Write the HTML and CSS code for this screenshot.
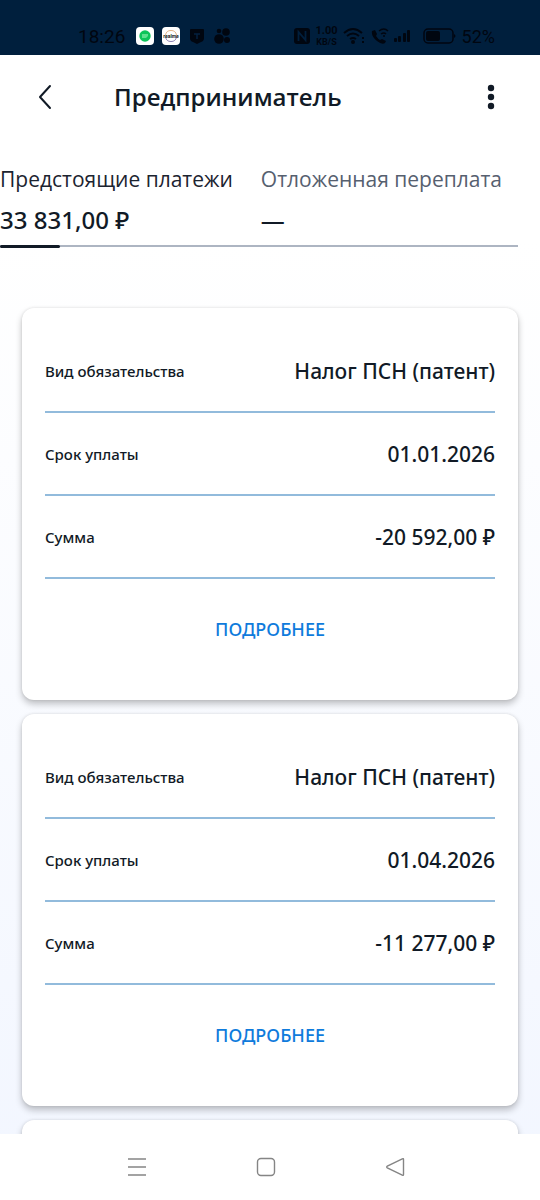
FILE: index.html
```html
<!DOCTYPE html>
<html lang="ru">
<head>
<meta charset="utf-8">
<meta name="viewport" content="width=device-width, initial-scale=1">
<title>Предприниматель</title>
<link rel="stylesheet" href="styles.css">
</head>
<body>
<div class="status">
  <div class="status-left">
    <span class="clock">18:26</span>
    <svg class="tile" width="18" height="18" viewBox="0 0 18 18"><rect width="18" height="18" rx="4" fill="#fff"/><circle cx="9" cy="9" r="5.7" fill="#0cc45a"/><path d="M6 7h6v2l-2 2H6z" fill="#5ce08e"/></svg>
    <svg class="tile" width="18" height="18" viewBox="0 0 18 18"><rect width="18" height="18" rx="4" fill="#fff"/><path d="M3.5 8a5.6 5.6 0 0 1 11 0" fill="none" stroke="#e3b58a"/><path d="M3.5 10a5.6 5.6 0 0 0 11 0" fill="none" stroke="#8d83b5"/><text x="9" y="11" class="tile-text" text-anchor="middle">realme</text></svg>
    <svg class="shield" width="16" height="16" viewBox="0 0 16 16"><path d="M1 2q0-1 1-1h12q1 0 1 1v8q0 3-3 4l-4 2-4-2q-3-1-3-4z" fill="#000610"/><path d="M5 6h6M8 6v5" stroke="#03213f" stroke-width="1.500"/></svg>
    <svg width="18" height="16" viewBox="0 0 18 16" fill="#000610"><circle cx="6" cy="11" r="4.800"/><circle cx="13" cy="4" r="3.800"/><circle cx="6" cy="3" r="2.300"/><circle cx="14" cy="12" r="3"/></svg>
  </div>
  <div class="status-right">
    <svg width="16" height="16" viewBox="0 0 16 16"><rect width="16" height="16" rx="3" fill="#000610"/><path d="M4.500 13V4l7 8V3" fill="none" stroke="#001f3d" stroke-width="1.800"/></svg>
    <span class="speed"><b>1.00</b><b class="unit">KB/S</b></span>
    <svg width="23" height="18" viewBox="0 0 23 18" fill="none" stroke="#000610" stroke-width="2"><path d="M1 6q9-8 18 0M4 9q6-5 12 0M7 12q3-2 6 0"/><circle cx="10" cy="15" r="1" fill="#000610"/><path d="M20 10v2M20 14v2"/></svg>
    <svg width="18" height="16" viewBox="0 0 18 16"><path d="M1 3l3-1 2 4-1 2q2 3 4 4l2-1 4 2-1 2q-3 2-8-2Q0 8 1 3z" fill="#000610"/><path d="M8 3q5-4 9 0M10 6q3-2 5 0M12 8h2" fill="none" stroke="#000610" stroke-width="1.500"/></svg>
    <svg class="signal" width="18" height="14" viewBox="0 0 18 14" fill="#000610"><rect y="9" width="3" height="4" rx="1"/><rect x="4" y="7" width="3" height="6" rx="1"/><rect x="9" y="4" width="3" height="9" rx="1"/><rect x="13" y="1" width="3" height="12" rx="1"/></svg>
    <svg class="battery" width="34" height="16" viewBox="0 0 34 16"><rect x="1" y="1" width="29" height="14" rx="4" fill="none" stroke="#000610" stroke-width="1.500"/><rect x="3" y="3" width="14" height="10" rx="2" fill="#000610"/><path d="M31 6q3 2 0 4z" fill="#000610"/></svg>
    <span class="percent">52%</span>
  </div>
</div>

<header class="appbar">
  <button class="icon-btn" aria-label="Назад"><svg width="14" height="26" viewBox="0 0 14 26"><path d="M12 2L2 13l10 11" fill="none" stroke="#111a26" stroke-width="2" stroke-linecap="round" stroke-linejoin="round"/></svg></button>
  <h1>Предприниматель</h1>
  <button class="icon-btn" aria-label="Меню"><svg width="8" height="26" viewBox="0 0 8 26" fill="#111a26"><circle cx="4" cy="4" r="3.200"/><circle cx="4" cy="13" r="3.200"/><circle cx="4" cy="22" r="3.200"/></svg></button>
</header>

<main>
  <nav class="tabs">
    <button class="tab active"><span class="tab-label">Предстоящие платежи</span><span class="tab-value">33 831,00 ₽</span></button>
    <button class="tab"><span class="tab-label">Отложенная переплата</span><span class="tab-value">—</span></button>
  </nav>
  <section class="cards">
    <article class="card">
      <dl>
        <div class="row"><dt>Вид обязательства</dt><dd>Налог ПСН (патент)</dd></div>
        <div class="row"><dt>Срок уплаты</dt><dd>01.01.2026</dd></div>
        <div class="row"><dt>Сумма</dt><dd>-20 592,00 ₽</dd></div>
      </dl>
      <button class="more">ПОДРОБНЕЕ</button>
    </article>
    <article class="card">
      <dl>
        <div class="row"><dt>Вид обязательства</dt><dd>Налог ПСН (патент)</dd></div>
        <div class="row"><dt>Срок уплаты</dt><dd>01.04.2026</dd></div>
        <div class="row"><dt>Сумма</dt><dd>-11 277,00 ₽</dd></div>
      </dl>
      <button class="more">ПОДРОБНЕЕ</button>
    </article>
    <article class="card"></article>
  </section>
</main>

<footer class="navbar">
  <button aria-label="Недавние"><svg width="20" height="20" viewBox="0 0 20 20"><path d="M1 2h18M1 10h18M1 18h18" stroke="#858585" stroke-width="1.500"/></svg></button>
  <button aria-label="Домой"><svg width="20" height="20" viewBox="0 0 20 20"><rect x="1.500" y="1.500" width="17" height="17" rx="3.500" fill="none" stroke="#858585" stroke-width="1.400"/></svg></button>
  <button aria-label="Назад"><svg width="20" height="20" viewBox="0 0 20 20"><path d="M17.300 1.800Q18.500 1.300 18.500 2.500v15q0 1.200-1.200.7L2.300 10.800q-1.200-.8 0-1.600z" fill="none" stroke="#858585" stroke-width="1.400"/></svg></button>
</footer>
</body>
</html>
```
FILE: styles.css
```css
* { box-sizing: border-box; }

body {
  margin: 0;
  height: 100vh;
  display: flex;
  flex-direction: column;
  overflow: hidden;
  font-family: "Open Sans", "Noto Sans", sans-serif;
  color: #111a26;
  background: linear-gradient(#fff 20%, #f2f6ff);
}

button {
  padding: 0;
  border: 0;
  background: none;
  color: inherit;
  font: inherit;
}

svg { display: block; flex: none; }

.status {
  flex: none;
  height: 55px;
  padding: 18px 45px 0 78px;
  display: flex;
  justify-content: space-between;
  background: #001f3d;
  color: #000610;
  font-family: Roboto, sans-serif;
}

.status-left,
.status-right {
  display: flex;
  align-items: center;
  height: 36px;
}

.status-left { gap: 8px; }
.status-right { gap: 5px; }

.clock { font-size: 19px; margin-right: 3px; }
.percent { font-size: 18px; }
.tile-text { font-size: 5px; font-weight: 700; fill: #222; }
.shield { margin-left: 1px; }
.battery { margin-left: 6px; }

.speed {
  display: flex;
  flex-direction: column;
  align-items: center;
  font-size: 11px;
  line-height: 12px;
}

.speed .unit { font-size: 9px; line-height: 10px; }

.appbar {
  flex: none;
  height: 85px;
  padding: 0 29px 2px 25px;
  display: flex;
  align-items: center;
  background: #fff;
}

.icon-btn {
  width: 40px;
  height: 40px;
  display: grid;
  place-items: center;
}

.appbar h1 {
  flex: 1;
  margin: 0 0 0 49px;
  font-size: 24px;
  line-height: 32px;
  font-weight: 600;
}

main {
  flex: 1;
  min-height: 0;
  overflow: hidden;
}

.tabs {
  display: flex;
  gap: 28px;
  margin: 24px 22px 0 0;
  border-bottom: 2px solid #adb5c2;
}

.tab {
  position: relative;
  display: flex;
  flex-direction: column;
  gap: 10px;
  height: 81px;
  text-align: left;
  white-space: nowrap;
  color: #56606f;
}

.active { color: #1c2430; }

.active::after {
  content: "";
  position: absolute;
  left: 0;
  bottom: -3px;
  width: 60px;
  height: 3px;
  border-radius: 2px;
  background: #111a26;
}

.tab-label { font-size: 21px; line-height: 30px; }

.tab-value {
  font-family: "Noto Sans", "Open Sans", sans-serif;
  font-size: 24px;
  line-height: 32px;
  font-weight: 500;
  color: #111a26;
}

.cards {
  display: flex;
  flex-direction: column;
  gap: 14px;
  padding: 61px 22px 0;
  font-family: "Noto Sans", "Open Sans", sans-serif;
}

.card {
  padding: 22px 23px;
  border-radius: 12px;
  background: #fff;
  box-shadow: 0 4px 7px rgba(0, 0, 0, 0.24), 0 0 3px rgba(0, 0, 0, 0.1);
}

.card dl { margin: 0; }

.row {
  display: flex;
  align-items: center;
  justify-content: space-between;
  height: 83px;
  border-bottom: 2px solid #92bbdc;
}

.row dt { font-size: 15px; font-weight: 500; }

.row dd {
  margin: 0;
  font-size: 21px;
  font-weight: 500;
}

.more {
  width: 100%;
  height: 99px;
  font-size: 18px;
  font-weight: 500;
  color: #0f7bdc;
}

.navbar {
  flex: none;
  height: 66px;
  padding: 0 81px 0 72px;
  display: grid;
  grid-template-columns: repeat(3, 1fr);
  place-items: center;
  background: #fff;
}
```
